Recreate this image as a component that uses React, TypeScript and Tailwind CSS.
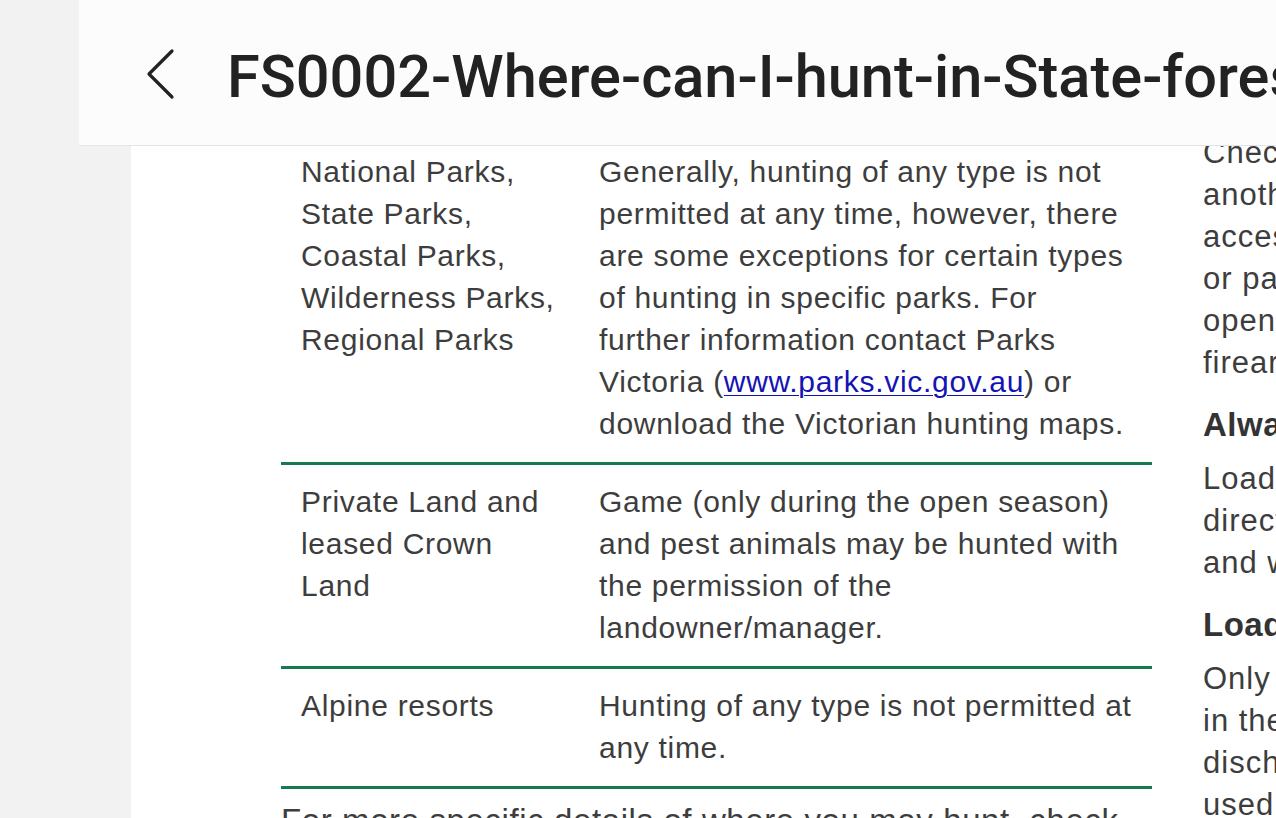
import React from 'react';

const bodyFont = "font-['Liberation_Sans',Arial,sans-serif] text-[30px] tracking-[0.7px] leading-[42px] text-[#3d3d3d]";

const rows = [
    {
        place: ['National Parks,', 'State Parks,', 'Coastal Parks,', 'Wilderness Parks,', 'Regional Parks'],
        rule: (
            <>
                Generally, hunting of any type is not permitted at any time, however, there are some exceptions for
                certain types of hunting in specific parks. For further information contact Parks Victoria (
                <a href="#" className="text-[#1414b4] underline decoration-1 underline-offset-[3px]">
                    www.parks.vic.gov.au
                </a>
                ) or download the Victorian hunting maps.
            </>
        ),
    },
    {
        place: ['Private Land and', 'leased Crown', 'Land'],
        rule: <>Game (only during the open season) and pest animals may be hunted with the permission of the landowner/manager.</>,
    },
    {
        place: ['Alpine resorts'],
        rule: <>Hunting of any type is not permitted at any time.</>,
    },
];

// second column of the document, clipped by the window
const sideBlocks: { heading?: string; lines: string[] }[] = [
    { lines: ['Check whether the area', 'another hunter or party', 'access to the area', 'or park ranger if in', 'open areas where', 'firearms may be used.'] },
    { heading: 'Always', lines: ['Load and unload the', 'direction of the muzzle', 'and when not in use.'] },
    { heading: 'Loading', lines: ['Only load a firearm', 'in the field when', 'discharge is intended', 'used for hunting.'] },
];

function BackChevron() {
    return (
        <svg width="40" height="60" viewBox="0 0 40 60" fill="none" className="mt-[43px] shrink-0">
            <path d="M32 8 L9 31 L32 54" stroke="#222222" strokeWidth="3.2" strokeLinecap="round" strokeLinejoin="round" />
        </svg>
    );
}

export default function App() {
    return (
        <div className="h-[818px] w-full overflow-hidden bg-[#f2f2f2] flex">
            <div className="w-[79px] shrink-0" />
            <div className="flex-1 min-w-0 flex flex-col">
                {/* Top bar */}
                <div className="h-[146px] shrink-0 bg-[#fcfcfc] border-b border-[#e4e4e4] flex items-start pl-[61px] overflow-hidden">
                    <BackChevron />
                    <h1 className="ml-[47px] mt-[41px] whitespace-nowrap font-['Roboto',sans-serif] font-medium text-[59.5px] leading-[72px] text-[#222222]">
                        FS0002-Where-can-I-hunt-in-State-forests
                    </h1>
                </div>

                {/* Document */}
                <div className="flex-1 flex min-h-0">
                    <div className="w-[52px] shrink-0" />
                    <div className={`flex-1 min-w-0 bg-white overflow-hidden flex pl-[150px] ${bodyFont}`}>
                        <div className="w-[871px] shrink-0">
                            <div className="-mt-[11px]">
                                {rows.map((row, i) => (
                                    <div key={i} className="grid grid-cols-[298px_1fr] border-b-[3px] border-[#17794f]">
                                        <div className="pl-[20px] pt-[16px] pb-[17px]">
                                            {row.place.map((p) => (
                                                <div key={p}>{p}</div>
                                            ))}
                                        </div>
                                        <div className="pl-[20px] pr-[18px] pt-[16px] pb-[17px]">{row.rule}</div>
                                    </div>
                                ))}
                            </div>
                            <p className="mt-[9px] text-[33px] tracking-[0.6px] leading-[46px]">
                                For more specific details of where you may hunt, check the Victorian hunting maps.
                            </p>
                        </div>

                        <div className="ml-[51px] -mt-[14px] whitespace-nowrap text-[31px] tracking-[1px]">
                            {sideBlocks.map((b, i) => (
                                <div key={i}>
                                    {b.heading && (
                                        <div className="mt-[20px] mb-[12px] font-bold text-[33px] tracking-[0.5px] text-[#333333]">
                                            {b.heading}
                                        </div>
                                    )}
                                    {b.lines.map((l) => (
                                        <div key={l}>{l}</div>
                                    ))}
                                </div>
                            ))}
                        </div>
                    </div>
                </div>
            </div>
        </div>
    );
}
